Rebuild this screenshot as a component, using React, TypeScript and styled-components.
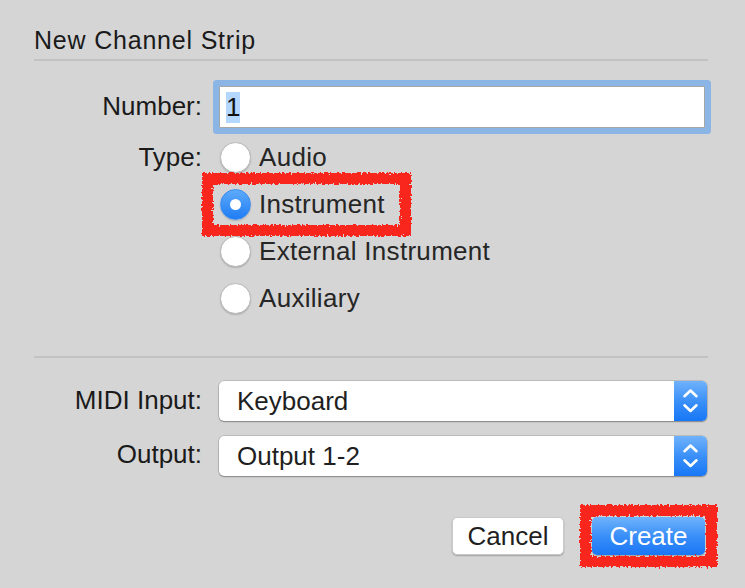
import React from "react";
import styled, { createGlobalStyle } from "styled-components";

const GlobalStyle = createGlobalStyle`
  html, body {
    margin: 0;
    padding: 0;
    background: #d5d5d5;
  }
  body {
    font-family: "Liberation Sans", Arial, sans-serif;
    -webkit-font-smoothing: antialiased;
  }
`;

const Dialog = styled.div`
  width: 745px;
  height: 588px;
  box-sizing: border-box;
  padding: 25px 37px 0 34px;
  background: #d5d5d5;
  display: flex;
  flex-direction: column;
  overflow: hidden;
`;

const Title = styled.h1`
  margin: 0;
  font-size: 25px;
  line-height: 30px;
  font-weight: 400;
  color: #1a1a1a;
  letter-spacing: 0.8px;
`;

const Divider = styled.hr<{ $gap: number }>`
  margin: ${(p) => p.$gap}px 0 0;
  border: 0;
  height: 2px;
  background: #c2c2c2;
`;

const FormRow = styled.div<{ $gap: number }>`
  display: grid;
  grid-template-columns: 168px 1fr;
  column-gap: 17px;
  align-items: start;
  margin-top: ${(p) => p.$gap}px;
`;

const Label = styled.div<{ $lh: number }>`
  text-align: right;
  font-size: 26px;
  line-height: ${(p) => p.$lh}px;
  color: #1a1a1a;
`;

const TextField = styled.div`
  width: 486px;
  height: 42px;
  box-sizing: border-box;
  border: 1px solid #a6a6a6;
  border-radius: 1px;
  background: #fff;
  box-shadow: 0 0 0 6px #8bb5e5;
  display: flex;
  align-items: center;
  padding-left: 6px;
`;

const Selection = styled.span`
  display: inline-block;
  background: #b3d7ff;
  font-size: 26px;
  line-height: 31px;
  color: #111;
`;

const RadioGroup = styled.div`
  display: flex;
  flex-direction: column;
`;

const RadioItem = styled.label`
  position: relative;
  height: 47px;
  display: flex;
  align-items: center;
  gap: 8px;
  padding-left: 1px;
  font-size: 26px;
  letter-spacing: 0.3px;
  color: #262626;
`;

const RadioCircle = styled.span<{ $checked?: boolean }>`
  position: relative;
  width: 31px;
  height: 31px;
  box-sizing: border-box;
  border-radius: 50%;
  flex: none;
  border: 1px solid ${(p) => (p.$checked ? "#3a8cf0" : "#b9b9b9")};
  background: ${(p) =>
    p.$checked ? "linear-gradient(#5eabfa, #1f7cf5)" : "#ffffff"};
  box-shadow: 0 1px 1.5px rgba(0, 0, 0, 0.18);
  &::after {
    content: "";
    display: ${(p) => (p.$checked ? "block" : "none")};
    position: absolute;
    left: 50%;
    top: 50%;
    width: 11px;
    height: 11px;
    margin: -5.5px 0 0 -5.5px;
    border-radius: 50%;
    background: #fff;
  }
`;

const SelectBox = styled.div`
  width: 488px;
  height: 40px;
  display: flex;
  border-radius: 5px;
  overflow: hidden;
  background: #fff;
  box-shadow: 0 0 0 0.5px rgba(0, 0, 0, 0.22), 0 1px 1.5px rgba(0, 0, 0, 0.3);
`;

const SelectValue = styled.div`
  flex: 1;
  padding-left: 18px;
  font-size: 26px;
  line-height: 40px;
  color: #1f1f1f;
`;

const Stepper = styled.div`
  width: 33px;
  flex: none;
  background: linear-gradient(#70b2fb, #3b90f8 50%, #1777f6);
  display: flex;
`;

const ButtonRow = styled.div`
  display: flex;
  justify-content: flex-end;
  gap: 28px;
  margin-top: 41px;
  padding-right: 3px;
`;

const Button = styled.button<{ $primary?: boolean }>`
  position: relative;
  height: 38px;
  width: ${(p) => (p.$primary ? 113 : 112)}px;
  box-sizing: border-box;
  border-radius: 5px;
  font-family: "Liberation Sans", Arial, sans-serif;
  font-size: 26px;
  line-height: 36px;
  padding: 0;
  color: ${(p) => (p.$primary ? "#ffffff" : "#1f1f1f")};
  border: ${(p) => (p.$primary ? "0" : "1px solid #c9c9c9")};
  background: ${(p) =>
    p.$primary ? "linear-gradient(#6fb3fb, #3a8ff8 50%, #1a76f5)" : "#ffffff"};
  box-shadow: 0 1px 1.5px rgba(0, 0, 0, 0.25);
`;

const ScribbleSvg = styled.svg<{ $left: number; $top: number }>`
  position: absolute;
  left: ${(p) => p.$left}px;
  top: ${(p) => p.$top}px;
  pointer-events: none;
  overflow: visible;
`;

function Scribble({
  left,
  top,
  w,
  h,
  id,
}: {
  left: number;
  top: number;
  w: number;
  h: number;
  id: string;
}) {
  return (
    <ScribbleSvg $left={left} $top={top} width={w} height={h} viewBox={`0 0 ${w} ${h}`}>
      <defs>
        <filter id={id} x="-10%" y="-20%" width="120%" height="140%">
          <feTurbulence type="fractalNoise" baseFrequency="0.5" numOctaves="2" seed="4" />
          <feDisplacementMap in="SourceGraphic" scale="6" xChannelSelector="R" yChannelSelector="G" />
        </filter>
      </defs>
      <rect
        x={6.5}
        y={6.5}
        width={w - 13}
        height={h - 13}
        fill="none"
        stroke="#f8281a"
        strokeWidth={11}
        filter={`url(#${id})`}
      />
    </ScribbleSvg>
  );
}

function Chevrons() {
  return (
    <svg width="33" height="40" viewBox="0 0 33 40">
      <path
        d="M10.5 15.2 L16.5 9.5 L22.5 15.2 M10.5 24.3 L16.5 30 L22.5 24.3"
        fill="none"
        stroke="#ffffff"
        strokeWidth="2.6"
        strokeLinecap="round"
        strokeLinejoin="round"
      />
    </svg>
  );
}

const types = ["Audio", "Instrument", "External Instrument", "Auxiliary"];

export default function App() {
  return (
    <>
      <GlobalStyle />
      <Dialog>
        <Title>New Channel Strip</Title>
        <Divider $gap={4} />

        <FormRow $gap={25}>
          <Label $lh={40}>Number:</Label>
          <TextField>
            <Selection>1</Selection>
          </TextField>
        </FormRow>

        <FormRow $gap={6}>
          <Label $lh={47}>Type:</Label>
          <RadioGroup>
            {types.map((t) => (
              <RadioItem key={t}>
                <RadioCircle $checked={t === "Instrument"} />
                {t}
                {t === "Instrument" && (
                  <Scribble id="rough-a" left={-18} top={-9} w={211} h={65} />
                )}
              </RadioItem>
            ))}
          </RadioGroup>
        </FormRow>

        <Divider $gap={34} />

        <FormRow $gap={23}>
          <Label $lh={38}>MIDI Input:</Label>
          <SelectBox>
            <SelectValue>Keyboard</SelectValue>
            <Stepper>
              <Chevrons />
            </Stepper>
          </SelectBox>
        </FormRow>

        <FormRow $gap={15}>
          <Label $lh={37}>Output:</Label>
          <SelectBox>
            <SelectValue>Output 1-2</SelectValue>
            <Stepper>
              <Chevrons />
            </Stepper>
          </SelectBox>
        </FormRow>

        <ButtonRow>
          <Button>Cancel</Button>
          <Button $primary>
            Create
            <Scribble id="rough-b" left={-13} top={-13} w={139} h={64} />
          </Button>
        </ButtonRow>
      </Dialog>
    </>
  );
}
